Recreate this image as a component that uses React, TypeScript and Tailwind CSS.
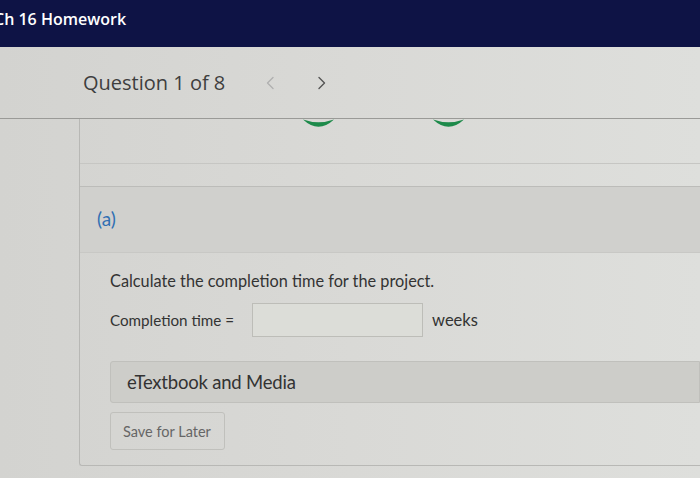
import React from "react";

function Arc() {
  return (
    <svg width="33" height="9" viewBox="0 0 33 9">
      <path d="M1 0.5 Q16.5 15 32 0.5 Q16.5 6 1 0.5 Z" fill="#1d8a4a" />
    </svg>
  );
}

function Chevron({ dir, color }: { dir: "l" | "r"; color: string }) {
  return (
    <svg width="10" height="14" viewBox="0 0 10 14">
      <path
        d={dir === "l" ? "M8 1.5 L2.5 7 L8 12.5" : "M2 1.5 L7.5 7 L2 12.5"}
        fill="none"
        stroke={color}
        strokeWidth="1.4"
        strokeLinecap="round"
        strokeLinejoin="round"
      />
    </svg>
  );
}

export default function App() {
  return (
    <div
      className="w-[700px] h-[478px] overflow-hidden bg-gradient-to-r from-[#d3d3d0] via-[#d9d9d6] to-[#dedfdc] flex flex-col"
      style={{ fontFamily: "Lato, 'Open Sans', sans-serif" }}
    >
      <div className="h-[47px] shrink-0 bg-[#0e1345] flex items-start pt-[7px]">
        <span
          className="-ml-[6px] text-white text-[16px] font-semibold"
          style={{ fontFamily: "'Open Sans', sans-serif" }}
        >
          Ch 16 Homework
        </span>
      </div>
      <div className="h-[72px] shrink-0 flex items-center pl-[83px] border-b border-[#9a9a97]">
        <span
          className="text-[20px] text-[#3e3e3e]"
          style={{ fontFamily: "'Open Sans', sans-serif" }}
        >
          Question 1 of 8
        </span>
        <span className="ml-[40px] flex">
          <Chevron dir="l" color="#b0b0b0" />
        </span>
        <span className="ml-[42px] flex">
          <Chevron dir="r" color="#555" />
        </span>
      </div>
      <div className="flex-1 flex flex-col">
        <div className="h-0 flex items-start pl-[302px] gap-[97px]">
          <Arc />
          <Arc />
        </div>
        <div className="ml-[79px] h-[347px] border-l border-b border-[#b8b8b5] rounded-bl-[3px] flex flex-col">
          <div className="h-[45px] border-b border-[#c6c6c3]" />
          <div className="h-[23px] border-b border-[#bcbcb9]" />
          <div className="h-[66px] bg-[#d0d0cd] border-b border-[#c8c8c5] flex items-center pl-[17px]">
            <span className="text-[19px] text-[#2f6fb3]">(a)</span>
          </div>
          <div className="pl-[30px] flex flex-col">
            <div className="mt-[16px] text-[16.3px] text-[#333]">
              Calculate the completion time for the project.
            </div>
            <div className="mt-[10px] flex items-center">
              <span className="text-[15.2px] text-[#333]">Completion time =</span>
              <div className="ml-[18px] w-[171px] h-[34px] border border-[#bdbdb8] bg-[#dcddd8]" />
              <span className="ml-[9px] text-[16.5px] text-[#333]">weeks</span>
            </div>
            <div className="mt-[24px] h-[42px] bg-[#cdcdc9] border border-[#c0c0bc] rounded-l-[3px] flex items-center pl-[16px]">
              <span className="text-[18.5px] text-[#333] tracking-[-0.2px]">eTextbook and Media</span>
            </div>
            <div className="mt-[9px] w-[115px] h-[38px] border border-[#c0c0bc] rounded-[3px] flex items-center pl-[12px]">
              <span className="text-[14.5px] text-[#666]">Save for Later</span>
            </div>
          </div>
        </div>
      </div>
    </div>
  );
}
